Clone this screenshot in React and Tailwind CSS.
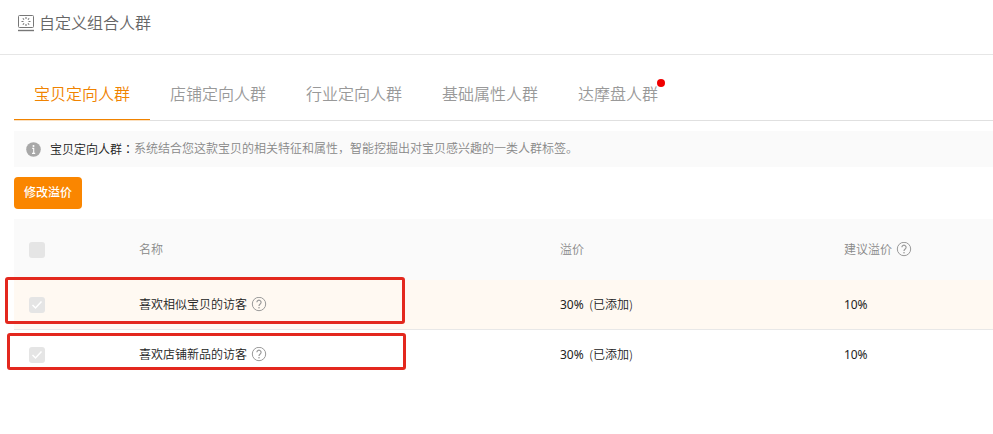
import { useState } from "react";

const tabs = [
  { key: "item", label: "宝贝定向人群", intro: "系统结合您这款宝贝的相关特征和属性，智能挖掘出对宝贝感兴趣的一类人群标签。" },
  { key: "shop", label: "店铺定向人群" },
  { key: "industry", label: "行业定向人群" },
  { key: "basic", label: "基础属性人群" },
  { key: "dmp", label: "达摩盘人群", isNew: true },
];

const crowds = [
  { id: 1, name: "喜欢相似宝贝的访客", premium: "30%", status: "(已添加)", suggest: "10%" },
  { id: 2, name: "喜欢店铺新品的访客", premium: "30%", status: "(已添加)", suggest: "10%" },
];

const PanelIcon = () => (
  <svg width="18" height="18" viewBox="0 0 18 18" fill="none" stroke="#777" aria-hidden="true">
    <rect x="1.5" y="1.5" width="15" height="12" rx="1" />
    <path d="M1 16.5h16" strokeWidth="1.4" />
    <path
      d="M9 3v2M9 10v2M4.5 7.5h2M11.5 7.5h2M5.8 4.3l1.3 1.3M10.9 9.4l1.3 1.3M12.2 4.3l-1.3 1.3M7.1 9.4l-1.3 1.3"
      strokeWidth="1.1"
    />
  </svg>
);

const InfoIcon = () => (
  <svg width="15" height="15" viewBox="0 0 15 15" aria-hidden="true">
    <circle cx="7.5" cy="7.5" r="7.3" fill="#a8a8a8" />
    <circle cx="7.5" cy="4" r="1" fill="#fff" />
    <path d="M6.2 6.4h1.5v4.8M6 11.4h3.2" fill="none" stroke="#fff" strokeWidth="1.1" />
  </svg>
);

const HelpIcon = () => (
  <svg width="16" height="16" viewBox="0 0 16 16" fill="none" stroke="#999" aria-hidden="true">
    <circle cx="8" cy="7" r="6.7" />
    <path d="M5.9 5.3a2.1 2.1 0 1 1 3.3 1.7c-.8.6-1.2.9-1.2 1.9" strokeWidth="1.2" />
    <circle cx="8" cy="10.7" r=".8" fill="#999" stroke="none" />
  </svg>
);

const Checkbox = ({ label, checked = false }) => (
  <span className="grid size-4">
    <input
      type="checkbox"
      aria-label={label}
      defaultChecked={checked}
      disabled
      className="col-start-1 row-start-1 size-4 appearance-none rounded-[3px] bg-[#e5e5e5]"
    />
    {checked && (
      <svg
        viewBox="0 0 16 16"
        className="pointer-events-none col-start-1 row-start-1 size-4"
        fill="none"
        stroke="#fff"
        strokeWidth="1.5"
        aria-hidden="true"
      >
        <path d="M3.5 8l3 3 6-6.5" />
      </svg>
    )}
  </span>
);

const App = () => {
  const [active, setActive] = useState("item");
  const current = tabs.find((tab) => tab.key === active);

  return (
    <div className="min-h-screen bg-white font-['Noto_Sans','Noto_Sans_CJK_SC',sans-serif] text-xs text-[#333]">
      <header className="flex h-[55px] items-center gap-1 border-b border-[#e6e6e6] px-[17px] pb-2">
        <PanelIcon />
        <h1 className="text-base leading-6 font-[350] text-[#666]">自定义组合人群</h1>
      </header>

      <main className="pl-3.5">
        <nav className="flex border-b border-[#e0e0e0] pt-3">
          {tabs.map((tab) => (
            <button
              key={tab.key}
              type="button"
              onClick={() => setActive(tab.key)}
              className={
                tab.key === active
                  ? "-mb-px h-[54px] border-b border-[#fbe0c0] px-5 text-base font-[350] text-[#f08300] shadow-[inset_0_-1px_0_#f08300]"
                  : "-mb-px h-[54px] border-b border-transparent px-5 text-base font-[350] text-[#999]"
              }
            >
              <span className="relative">
                {tab.label}
                {tab.isNew && (
                  <span className="absolute -top-1 -right-[7px] size-2 rounded-full bg-[#f00000]" />
                )}
              </span>
            </button>
          ))}
        </nav>

        <p className="mt-2.5 flex h-9 items-center bg-[#fafafa] pl-3 font-[350]">
          <InfoIcon />
          <span className="ml-[9px] text-[#222]">
            {current.label}
            <span className="font-['Noto_Sans_CJK_JP',sans-serif]" lang="ja">：</span>
          </span>
          <span className="text-[#888]">{current.intro}</span>
        </p>

        <button
          type="button"
          className="mt-2.5 mb-2.5 flex h-8 items-center rounded bg-[#fa8600] px-2.5 font-medium text-white"
        >
          修改溢价
        </button>

        <div className="relative">
          <table className="w-full table-fixed border-separate border-spacing-0 text-left font-[350]">
            <thead>
              <tr className="h-[61px] bg-[#fafafa] text-[#888]">
                <th className="w-[125px] pl-[15px]">
                  <Checkbox label="全选" />
                </th>
                <th className="w-[43%] font-[350]">名称</th>
                <th className="w-[29%] font-[350]">溢价</th>
                <th className="font-[350]">
                  <span className="flex items-center gap-1">
                    建议溢价
                    <HelpIcon />
                  </span>
                </th>
              </tr>
            </thead>
            <tbody className="text-[#222] [&>tr:first-child>td]:border-b [&>tr:first-child>td]:border-b-[#e8e8e8]">
              {crowds.map((crowd) => (
                <tr key={crowd.id} className="h-[50px] odd:bg-[#fff9f2]">
                  <td className="pl-[15px]">
                    <Checkbox label={crowd.name} checked />
                  </td>
                  <td>
                    <span className="flex items-center gap-1">
                      {crowd.name}
                      <HelpIcon />
                    </span>
                  </td>
                  <td>
                    <span className="flex gap-1.5">
                      <span className="font-normal">{crowd.premium}</span>
                      <span>{crowd.status}</span>
                    </span>
                  </td>
                  <td className="font-normal">{crowd.suggest}</td>
                </tr>
              ))}
            </tbody>
          </table>

          {/* highlight frames over the two rows */}
          <div className="pointer-events-none absolute top-[58px] -left-[9px] h-[47px] w-[400px] rounded-[3px] border-3 border-[#e3281e]" />
          <div className="pointer-events-none absolute top-[114px] -left-[7px] h-[37px] w-[399px] rounded-[3px] border-3 border-[#e3281e]" />
        </div>
      </main>
    </div>
  );
};

export default App;
